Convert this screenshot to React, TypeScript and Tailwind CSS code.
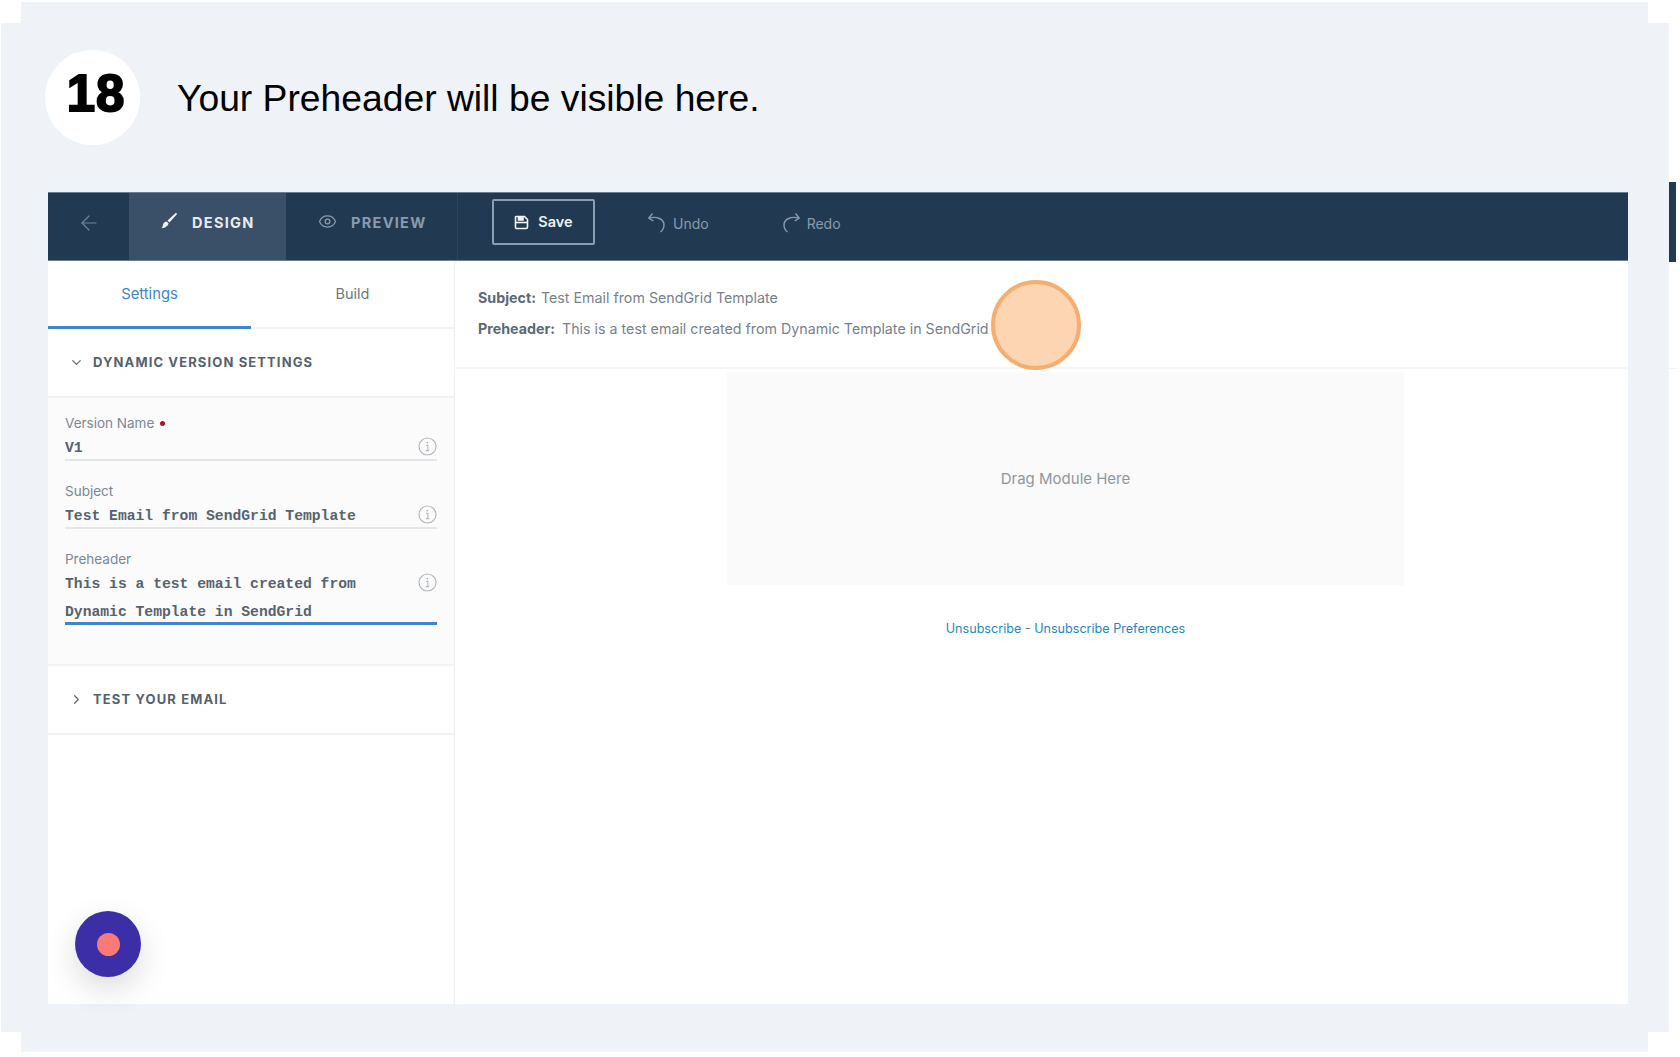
import { ArrowLeft, ChevronDown, ChevronRight, Eye } from 'lucide-react'

const UI_FONT = "font-['Inter','Noto_Sans',sans-serif]"

// info glyph next to each field
function InfoIcon() {
  return (
    <svg width="19" height="19" viewBox="0 0 19 19" fill="none" className="shrink-0">
      <circle cx="9.5" cy="9.5" r="8.5" stroke="#b4b9be" strokeWidth="1.2" />
      <path d="M8 8.2h1.8v5.2M7.8 13.6h3.6" stroke="#b4b9be" strokeWidth="1.1" />
      <circle cx="9.3" cy="5.6" r="0.9" fill="#b4b9be" />
    </svg>
  )
}

function BrushIcon() {
  return (
    <svg width="18" height="18" viewBox="0 0 18 18" fill="#f2f4f6" className="-translate-y-[2px]">
      <path d="M16.6 1.2c.4.3.4.8.1 1.2L9.4 10.4 7.5 8.6 15.4 1.3c.4-.3.9-.4 1.2-.1z" />
      <path d="M6.6 9.5l1.900 1.800c-.3 2.400-2.800 4.800-7.200 4.900 1.600-1.200 1.400-2.600 2-4.400.5-1.300 1.900-2.300 3.300-2.300z" />
    </svg>
  )
}

function SaveIcon() {
  return (
    <svg width="15" height="15" viewBox="0 0 15 15" fill="none" stroke="#f2f4f6" strokeWidth="1.6">
      <path d="M2.500 1.500h8l3 3v7.500a1.500 1.500 0 0 1-1.500 1.500h-9.500a1 1 0 0 1-1-1v-10a.5.5 0 0 1 1-.5z" />
      <path d="M1.500 7.500h12" />
      <path d="M4.500 1.500v3.500h4.500v-3.500" fill="#f2f4f6" />
    </svg>
  )
}

function UndoIcon({ flip }: { flip?: boolean }) {
  return (
    <svg width="20" height="22" viewBox="0 0 20 22" fill="none" stroke="#8a9bad" strokeWidth="1.4" className={flip ? '-scale-x-100' : ''}>
      <path d="M2 6c8-2 15 1 15 7 0 3-1.500 5.500-3.500 7" />
      <path d="M5.500 1.500 1.800 6l4.500 3" />
    </svg>
  )
}

function Field({ label, required, lines, active }: { label: string; required?: boolean; lines: string[]; active?: boolean }) {
  return (
    <div>
      <div className="h-5 flex items-center gap-[6px] text-[13.5px] leading-5 text-[#7b8794]">
        {label}
        {required && <span className="size-[5px] rounded-full bg-[#b0102c]" />}
      </div>
      <div className={`flex justify-between ${active ? 'h-[56px] border-b-[3px] border-[#3f86c9]' : 'h-[28px] border-b-2 border-[#e3e5e7]'}`}>
        <div className="font-['Liberation_Mono',monospace] text-[14.7px] font-bold leading-[28px] pt-px text-[#56636f] h-fit">
          {lines.map(line => (
            <div key={line} className="whitespace-nowrap">{line}</div>
          ))}
        </div>
        <div className="pt-[4px]">
          <InfoIcon />
        </div>
      </div>
    </div>
  )
}

function Sidebar() {
  return (
    <div className="w-[407px] shrink-0 border-r border-[#eceef0] relative">
      <div className="flex h-[68px] border-b-2 border-[#f1f2f3]">
        <div className="w-[203px] h-[68px] border-b-[3px] border-[#3f86c9] text-center pt-[23px] text-[14.8px] leading-5 text-[#3f86c9]">Settings</div>
        <div className="w-[203px] text-center pt-[23px] text-[14.5px] leading-5 text-[#6d7883]">Build</div>
      </div>

      <div className="h-[69px] flex items-center border-b-2 border-[#f1f2f3] pl-[21px]">
        <ChevronDown size={15} strokeWidth={2} color="#5f6c78" />
        <span className="ml-[9px] text-[13px] font-bold tracking-[1.12px] text-[#55626e]">DYNAMIC VERSION SETTINGS</span>
      </div>

      <div className="bg-[#fbfbfb] h-[268px] pt-[15px] px-[17px] border-b-2 border-[#f1f2f3] flex flex-col gap-[20px]">
        <Field label="Version Name" required lines={['V1']} />
        <Field label="Subject" lines={['Test Email from SendGrid Template']} />
        <Field label="Preheader" active lines={['This is a test email created from', 'Dynamic Template in SendGrid']} />
      </div>

      <div className="h-[69px] flex items-center border-b-2 border-[#f1f2f3] pl-[21px]">
        <ChevronRight size={15} strokeWidth={2} color="#5f6c78" />
        <span className="ml-[9px] text-[13px] font-bold tracking-[1.12px] text-[#55626e]">TEST YOUR EMAIL</span>
      </div>

      {/* chat launcher */}
      <div className="absolute left-[27px] bottom-[27px] size-[66px] rounded-full bg-[#3b2ea6] flex items-center justify-center shadow-[0_12px_32px_rgba(0,0,0,0.14)]">
        <div className="size-[23px] rounded-full bg-[#fa7a78]" />
      </div>
    </div>
  )
}

function Canvas() {
  return (
    <div className="flex-1 relative">
      <div className="h-[108px] border-b-2 border-[#f2f4f5] pl-[23px] pt-[26px] text-[14.25px] text-[#76818c]">
        <div className="h-[22px] leading-[22px] flex">
          <span className="font-bold text-[#5b6875] mr-[5px]">Subject:</span>
          Test Email from SendGrid Template
        </div>
        <div className="h-[22px] mt-[9px] leading-[22px] flex">
          <span className="font-bold text-[#5b6875] mr-[7px]">Preheader:</span>
          This is a test email created from Dynamic Template in SendGrid
        </div>
      </div>

      {/* highlight marker */}
      <div className="absolute left-[536px] top-[19px] size-[90px] rounded-full bg-[#fdd5b3] border-[4px] border-[#f6ae6e]" />

      <div className="ml-[272px] w-[677px] pt-[3px]">
        <div className="h-[213px] bg-[#fafafa] flex items-center justify-center pt-[1px] text-[15px] text-[#8f979e]">Drag Module Here</div>
        <div className="mt-[34px] text-center text-[12.6px] leading-5 text-[#6f7a84]">
          <span className="text-[#1f87c0]">Unsubscribe</span> - <span className="text-[#1f87c0]">Unsubscribe Preferences</span>
        </div>
      </div>
    </div>
  )
}

function Toolbar() {
  return (
    <div className="h-[69px] flex bg-[#213a52] border-y border-[#8c9cad]/70">
      <div className="w-[81px] flex items-center justify-center pb-[8px]">
        <ArrowLeft size={24} strokeWidth={1.2} color="#71859a" />
      </div>
      <div className="w-[157px] bg-[#3a5068] flex items-center pl-[31px] pb-[7px] gap-[14px]">
        <BrushIcon />
        <span className="text-[14.5px] font-bold tracking-[1.3px] text-[#e8ebee]">DESIGN</span>
      </div>
      <div className="w-[172px] flex items-center pl-[32px] pb-[7px] gap-[14px] border-r border-[#2c445c]">
        <Eye size={19} strokeWidth={1.6} color="#8a9bad" className="-translate-y-[2px]" />
        <span className="text-[14.5px] font-bold tracking-[1.3px] text-[#8a9bad]">PREVIEW</span>
      </div>
      <div className="ml-[34px] my-[6px] w-[103px] h-[46px] border-2 border-[#8c9fb1] rounded-[2px] flex items-center justify-center gap-[9px]">
        <SaveIcon />
        <span className="text-[14.5px] font-semibold text-[#eef1f3]">Save</span>
      </div>
      <div className="ml-[52px] flex items-center gap-[6px] pb-[7px]">
        <UndoIcon />
        <span className="text-[14px] text-[#8a9bad]">Undo</span>
      </div>
      <div className="ml-[72px] flex items-center gap-[6px] pb-[7px]">
        <UndoIcon flip />
        <span className="text-[14px] text-[#8a9bad]">Redo</span>
      </div>
    </div>
  )
}

export default function App() {
  return (
    <div className={`min-h-screen bg-white pt-[2px] overflow-hidden ${UI_FONT}`}>
      <div className="ml-[21px] w-[1627px] h-[21px] bg-[#eff3f8]" />
      <div className="flex">
        <div className="ml-[1px] w-[1668px] h-[1009px] bg-[#eff3f8] pl-[47px]">
          <div className="h-[169px] flex items-start pt-[27px]">
            <div className="ml-[-3px] size-[95px] rounded-full bg-white flex items-center justify-center font-['Liberation_Sans',sans-serif] text-[51px] font-bold tracking-[1px] text-black [-webkit-text-stroke:2px_black] pb-[6px] pl-[7px]">18</div>
            <div className="ml-[37px] mt-[23px] font-['Liberation_Sans',sans-serif] text-[37.25px] leading-[50px] text-black">Your Preheader will be visible here.</div>
          </div>
          <div className="w-[1580px] h-[812px] bg-white flex flex-col">
            <Toolbar />
            <div className="flex flex-1">
              <Sidebar />
              <Canvas />
            </div>
          </div>
        </div>
        {/* edge of the next slide */}
        <div className="w-[7px]">
          <div className="mt-[159px] h-[80px] bg-[#213a52]" />
          <div className="mt-[106px] h-px bg-[#f0f1f2]" />
        </div>
      </div>
      <div className="ml-[21px] w-[1627px] h-[20px] bg-[#eff3f8]" />
    </div>
  )
}
